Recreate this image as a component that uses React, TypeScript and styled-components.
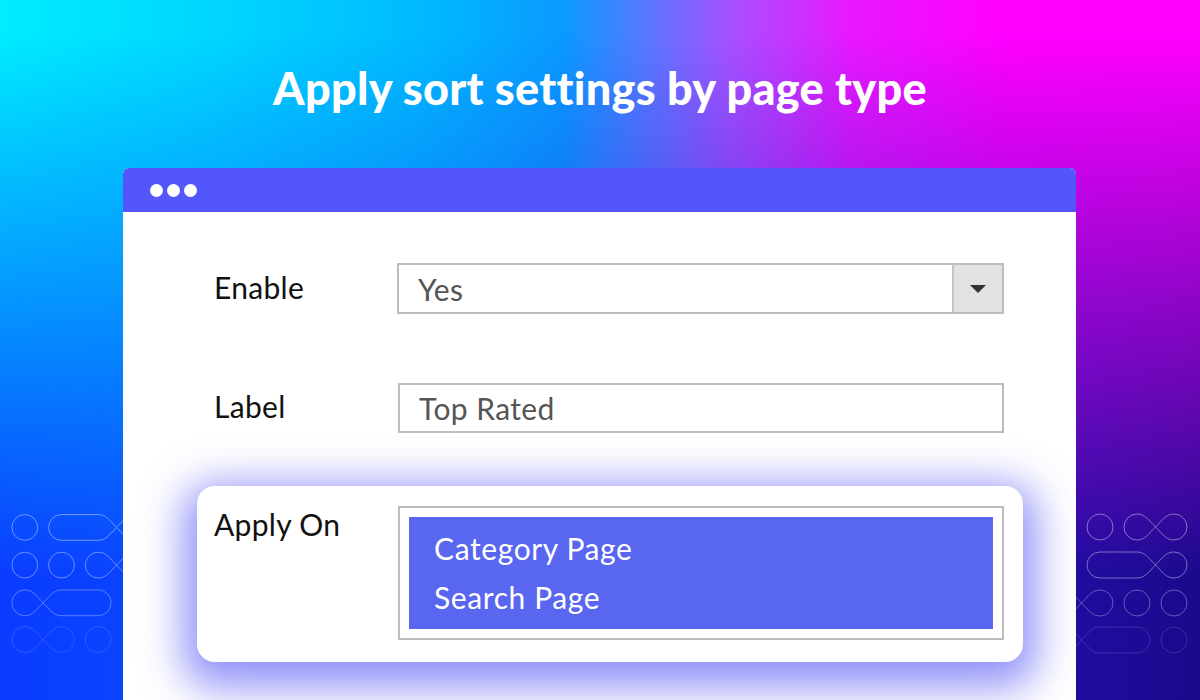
import React from "react";
import styled, { createGlobalStyle } from "styled-components";

const GlobalStyle = createGlobalStyle`
  *, *::before, *::after { box-sizing: border-box; }
  html, body { margin: 0; padding: 0; }
  body {
    font-family: "Lato", "Liberation Sans", sans-serif;
    background: #1a0a8c;
  }
`;

// decorative line pattern in the side gutters
const R = 13;
const HALF = 18.5;

function lobe(xm: number, xEnd: number, cy: number) {
  const s = xEnd > xm ? 1 : -1;
  const a = xm + s * HALF;
  const c = xEnd - s * R;
  const sweep = s > 0 ? 1 : 0;
  return [
    `C ${xm + s * 7} ${cy - 7} ${a - s * 8} ${cy - R} ${a} ${cy - R}`,
    `L ${c} ${cy - R}`,
    `A ${R} ${R} 0 0 ${sweep} ${c} ${cy + R}`,
    `L ${a} ${cy + R}`,
    `C ${a - s * 8} ${cy + R} ${xm + s * 7} ${cy + 7} ${xm} ${cy}`,
  ].join(" ");
}

const infinity = (xm: number, left: number, right: number, cy: number) =>
  `M ${xm} ${cy} ${lobe(xm, right, cy)} ${lobe(xm, left, cy)} Z`;

type Shape =
  | { kind: "circle"; cx: number }
  | { kind: "inf"; xm: number; left: number; right: number };

type PatternRow = { cy: number; opacity: number; shapes: Shape[] };

const leftRows: PatternRow[] = [
  {
    cy: 27,
    opacity: 0.42,
    shapes: [
      { kind: "circle", cx: 25 },
      { kind: "inf", xm: 117.5, left: 49, right: 160 },
    ],
  },
  {
    cy: 65,
    opacity: 0.4,
    shapes: [
      { kind: "circle", cx: 25 },
      { kind: "circle", cx: 62 },
      { kind: "inf", xm: 117.5, left: 86, right: 160 },
    ],
  },
  {
    cy: 103,
    opacity: 0.32,
    shapes: [{ kind: "inf", xm: 43.5, left: 12, right: 112 }],
  },
  {
    cy: 140,
    opacity: 0.14,
    shapes: [
      { kind: "inf", xm: 43.5, left: 12, right: 75 },
      { kind: "circle", cx: 99 },
    ],
  },
];

const rightRows: PatternRow[] = [
  {
    cy: 27,
    opacity: 0.42,
    shapes: [
      { kind: "circle", cx: 24 },
      { kind: "inf", xm: 79.5, left: 48, right: 111 },
    ],
  },
  {
    cy: 65,
    opacity: 0.4,
    shapes: [{ kind: "inf", xm: 79.5, left: 11, right: 111 }],
  },
  {
    cy: 103,
    opacity: 0.32,
    shapes: [
      { kind: "inf", xm: 5.5, left: -26, right: 37 },
      { kind: "circle", cx: 61 },
      { kind: "circle", cx: 98 },
    ],
  },
  {
    cy: 140,
    opacity: 0.14,
    shapes: [
      { kind: "inf", xm: 5.5, left: -26, right: 74 },
      { kind: "circle", cx: 98 },
    ],
  },
];

function Pattern({ rows }: { rows: PatternRow[] }) {
  return (
    <svg width="124" height="160" viewBox="0 0 124 160" fill="none">
      {rows.map((row, i) => (
        <g key={i} stroke="#fff" strokeWidth="1" opacity={row.opacity}>
          {row.shapes.map((s, j) =>
            s.kind === "circle" ? (
              <circle key={j} cx={s.cx} cy={row.cy} r={R} />
            ) : (
              <path key={j} d={infinity(s.xm, s.left, s.right, row.cy)} />
            )
          )}
        </g>
      ))}
    </svg>
  );
}

export default function App() {
  return (
    <>
      <GlobalStyle />
      <Page>
        <Title>Apply sort settings by page type</Title>
        <Stage>
          <Gutter>
            <Pattern rows={leftRows} />
          </Gutter>
          <Window>
            <TitleBar>
              <Dot />
              <Dot />
              <Dot />
            </TitleBar>
            <Body>
              <FieldRow>
                <Label>Enable</Label>
                <Select>
                  <FieldValue>Yes</FieldValue>
                  <ArrowBox>
                    <Caret />
                  </ArrowBox>
                </Select>
              </FieldRow>
              <FieldRow $gap={69}>
                <Label>Label</Label>
                <Input>
                  <FieldValue>Top Rated</FieldValue>
                </Input>
              </FieldRow>
              <HighlightCard>
                <FieldRow $top>
                  <Label>Apply On</Label>
                  <MultiSelect>
                    <Options>
                      <Option>Category Page</Option>
                      <Option>Search Page</Option>
                    </Options>
                  </MultiSelect>
                </FieldRow>
              </HighlightCard>
            </Body>
          </Window>
          <Gutter>
            <Pattern rows={rightRows} />
          </Gutter>
        </Stage>
      </Page>
    </>
  );
}

const Page = styled.div`
  position: relative;
  width: 1200px;
  height: 700px;
  overflow: hidden;
  display: flex;
  flex-direction: column;
  padding-top: 62px;
  background: linear-gradient(
    90deg,
    #00ecff 0%,
    #00d6ff 18%,
    #00baff 35%,
    #0a9aff 47%,
    #5a78ff 54%,
    #a850ff 61%,
    #e818ff 71%,
    #ff00ff 84%,
    #ff00ff 100%
  );

  &::before {
    content: "";
    position: absolute;
    inset: 0;
    background: linear-gradient(
      90deg,
      #0a3cff 0%,
      #0a44ff 12%,
      #1e36ea 45%,
      #2a10c0 72%,
      #1a0a8c 100%
    );
    -webkit-mask-image: linear-gradient(180deg, transparent 5%, #000 82%);
    mask-image: linear-gradient(180deg, transparent 5%, #000 82%);
  }

  > * {
    position: relative;
  }
`;

const Title = styled.h1`
  margin: 0;
  text-align: center;
  color: #fff;
  font-family: "Lato", "Liberation Sans", sans-serif;
  font-weight: 900;
  font-size: 45px;
  line-height: 52px;
  letter-spacing: 0.3px;
`;

const Stage = styled.div`
  margin-top: 54px;
  display: grid;
  grid-template-columns: 123px 953px 124px;
  align-items: start;
`;

const Gutter = styled.div`
  padding-top: 332px;
  display: flex;

  svg {
    display: block;
  }
`;

const Window = styled.div`
  background: #fff;
  border-radius: 6px 6px 0 0;
  height: 560px;
`;

const TitleBar = styled.div`
  height: 44px;
  background: #5356fb;
  border-radius: 6px 6px 0 0;
  display: flex;
  align-items: center;
  gap: 4px;
  padding-left: 27px;
`;

const Dot = styled.span`
  width: 13px;
  height: 13px;
  border-radius: 50%;
  background: #fff;
`;

const Body = styled.div`
  padding: 51px 0 0 74px;
  display: flex;
  flex-direction: column;
  align-items: flex-start;
`;

const FieldRow = styled.div<{ $top?: boolean; $gap?: number }>`
  display: grid;
  grid-template-columns: 183px 607px;
  align-items: ${({ $top }) => ($top ? "start" : "center")};
  padding-left: ${({ $top }) => ($top ? "0" : "17px")};
  margin-top: ${({ $gap }) => ($gap ? `${$gap}px` : "0")};
`;

const Label = styled.div`
  color: #111;
  font-size: 30px;
  line-height: 36px;
  letter-spacing: 0.3px;
  padding-bottom: 4px;
`;

const fieldBox = `
  border: 2px solid #bdbdbd;
  background: #fff;
  display: flex;
  align-items: stretch;
`;

const Select = styled.div`
  ${fieldBox};
  height: 51px;
`;

const Input = styled.div`
  ${fieldBox};
  height: 50px;
  margin-left: 1px;
`;

const FieldValue = styled.div`
  flex: 1;
  display: flex;
  align-items: center;
  padding-left: 19px;
  color: #555;
  font-size: 30px;
  letter-spacing: 0.4px;
`;

const ArrowBox = styled.div`
  width: 50px;
  background: #e2e2e2;
  border-left: 2px solid #c4c4c4;
  display: flex;
  align-items: center;
  justify-content: center;
`;

const Caret = styled.span`
  width: 0;
  height: 0;
  border-left: 8px solid transparent;
  border-right: 8px solid transparent;
  border-top: 8px solid #333;
`;

const HighlightCard = styled.div`
  margin-top: 53px;
  width: 826px;
  padding: 20px 19px 22px 17px;
  background: #fff;
  border-radius: 18px;
  box-shadow: 0 12px 40px 14px rgba(106, 106, 246, 0.72);
`;

const MultiSelect = styled.div`
  border: 2px solid #bdbdbd;
  background: #fff;
  padding: 9px;
  margin-left: 1px;
`;

const Options = styled.div`
  background: #5866f0;
  padding: 7px 25px;
  display: flex;
  flex-direction: column;
`;

const Option = styled.div`
  color: #fff;
  font-size: 30px;
  line-height: 49px;
  letter-spacing: 0.6px;
`;
